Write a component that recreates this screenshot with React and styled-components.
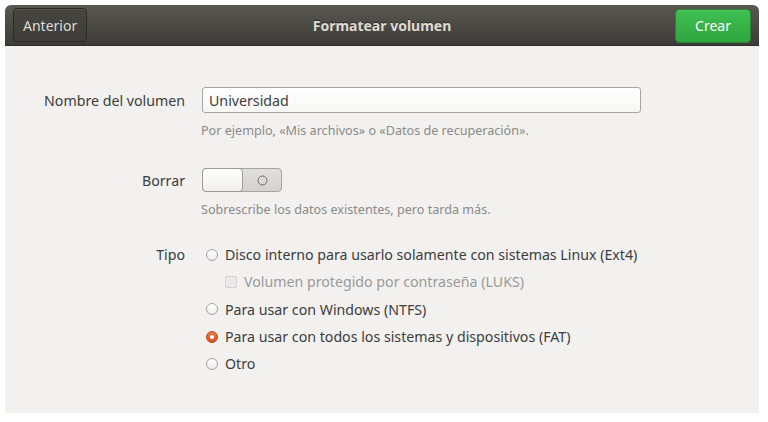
import React from "react";
import styled, { createGlobalStyle } from "styled-components";

const Global = createGlobalStyle`
  html, body { margin: 0; padding: 0; background: #ffffff; }
  body { font-family: "Noto Sans", "Open Sans", sans-serif; }
  #root { width: 768px; height: 422px; }
`;

const Page = styled.div`
  padding: 5px 9px 9px 5px;
  box-sizing: border-box;
  width: 768px;
  height: 422px;
`;

const Dialog = styled.div`
  display: flex;
  flex-direction: column;
  height: 408px;
  background: #f2f1f0;
  border-radius: 6px 6px 0 0;
  overflow: hidden;
`;

const HeaderBar = styled.div`
  height: 41px;
  flex: none;
  display: grid;
  grid-template-columns: 1fr auto 1fr;
  align-items: center;
  padding: 0 8px;
  background: linear-gradient(#5b5852, #3c3b37);
  border-bottom: 1px solid #2d2c29;
  box-sizing: border-box;
`;

const Title = styled.div`
  color: #dfdbd2;
  font-weight: bold;
  font-size: 14px;
  text-shadow: 0 -1px 0 rgba(0,0,0,0.4);
`;

const HeaderButton = styled.button`
  justify-self: ${(p) => (p.$end ? "end" : "start")};
  height: 34px;
  padding: 0 ${(p) => (p.$suggested ? "19px" : "9px")};
  min-width: ${(p) => (p.$suggested ? "73px" : "74px")};
  margin-top: ${(p) => (p.$suggested ? "1px" : "0")};
  border-radius: 4px;
  font-family: inherit;
  font-size: 14px;
  color: ${(p) => (p.$suggested ? "#ffffff" : "#dfdbd2")};
  border: 1px solid ${(p) => (p.$suggested ? "#27862f" : "#2b2a27")};
  background: ${(p) =>
    p.$suggested
      ? "linear-gradient(#3fc051, #2fa53f)"
      : "linear-gradient(#47453f, #3e3d39)"};
  box-shadow: inset 0 1px 0 rgba(255,255,255,0.08);
`;

const Content = styled.div`
  display: flex;
  flex-direction: column;
  padding-top: 41px;
`;

const Row = styled.div`
  display: grid;
  grid-template-columns: 180px 1fr;
  column-gap: 17px;
  align-items: ${(p) => (p.$top ? "start" : "center")};
  margin-top: ${(p) => p.$mt || 0}px;
`;

const Label = styled.div`
  text-align: right;
  font-size: 14.2px;
  color: #3c3c3c;
  line-height: ${(p) => (p.$lh ? p.$lh + "px" : "normal")};
`;

const Hint = styled.div`
  grid-column: 2;
  font-size: 12.6px;
  color: #8a8a87;
  line-height: 16px;
  margin-top: 10px;
  margin-left: -1px;
`;

const TextField = styled.div`
  width: 439px;
  height: 26px;
  box-sizing: border-box;
  border: 1px solid #a6a6a3;
  border-radius: 3px;
  background: linear-gradient(#ffffff, #f7f7f6);
  font-size: 14.2px;
  color: #3c3c3c;
  display: flex;
  align-items: center;
  padding-left: 6px;
`;

const Switch = styled.div`
  width: 80px;
  height: 24px;
  box-sizing: border-box;
  border: 1px solid #a3a3a0;
  border-radius: 4px;
  background: linear-gradient(#e1e0dd, #d3d2cf);
  display: flex;
  align-items: stretch;
`;

const SwitchKnob = styled.div`
  width: 39px;
  margin: -1px 0 -1px -1px;
  border: 1px solid #9b9b98;
  border-radius: 4px;
  background: linear-gradient(#ffffff, #f0efed);
`;

const SwitchOff = styled.div`
  flex: 1;
  display: flex;
  align-items: center;
  justify-content: center;
`;

const OptionList = styled.div`
  display: flex;
  flex-direction: column;
`;

const Option = styled.div`
  height: 27.3px;
  display: flex;
  align-items: center;
  gap: 7px;
  padding-left: ${(p) => (p.$indent ? "23px" : "4px")};
  font-size: 14.2px;
  color: ${(p) => (p.$disabled ? "#9a9a97" : "#3c3c3c")};
`;

const Radio = styled.span`
  width: 12px;
  height: 12px;
  border-radius: 50%;
  box-sizing: border-box;
  flex: none;
  display: flex;
  align-items: center;
  justify-content: center;
  border: 1px solid ${(p) => (p.$checked ? "#b84a1e" : "#a3a3a0")};
  background: ${(p) =>
    p.$checked ? "linear-gradient(#ef7a44, #d6531f)" : "linear-gradient(#ffffff, #eeedeb)"};
  &::after {
    content: "";
    display: ${(p) => (p.$checked ? "block" : "none")};
    width: 4px;
    height: 4px;
    border-radius: 50%;
    background: #ffffff;
  }
`;

const Check = styled.span`
  width: 12px;
  height: 12px;
  box-sizing: border-box;
  flex: none;
  border: 1px solid #d3d2cf;
  border-radius: 2px;
  background: #eae9e7;
`;

const options = [
  { text: "Disco interno para usarlo solamente con sistemas Linux (Ext4)" },
  { text: "Volumen protegido por contraseña (LUKS)", check: true },
  { text: "Para usar con Windows (NTFS)" },
  { text: "Para usar con todos los sistemas y dispositivos (FAT)", checked: true },
  { text: "Otro" },
];

export default function App() {
  return (
    <>
      <Global />
      <Page>
        <Dialog>
          <HeaderBar>
            <HeaderButton>Anterior</HeaderButton>
            <Title>Formatear volumen</Title>
            <HeaderButton $end $suggested>Crear</HeaderButton>
          </HeaderBar>
          <Content>
            <Row>
              <Label>Nombre del volumen</Label>
              <TextField>Universidad</TextField>
              <Hint>Por ejemplo, «Mis archivos» o «Datos de recuperación».</Hint>
            </Row>
            <Row $mt={29}>
              <Label>Borrar</Label>
              <Switch>
                <SwitchKnob />
                <SwitchOff>
                  <svg width="11" height="11" viewBox="0 0 11 11">
                    <circle cx="5.5" cy="5.5" r="4.5" fill="none" stroke="#6b6b70" strokeWidth="1" />
                  </svg>
                </SwitchOff>
              </Switch>
              <Hint>Sobrescribe los datos existentes, pero tarda más.</Hint>
            </Row>
            <Row $top $mt={23}>
              <Label $lh={27}>Tipo</Label>
              <OptionList>
                {options.map((o) => (
                  <Option key={o.text} $indent={o.check} $disabled={o.check}>
                    {o.check ? <Check /> : <Radio $checked={o.checked} />}
                    {o.text}
                  </Option>
                ))}
              </OptionList>
            </Row>
          </Content>
        </Dialog>
      </Page>
    </>
  );
}
